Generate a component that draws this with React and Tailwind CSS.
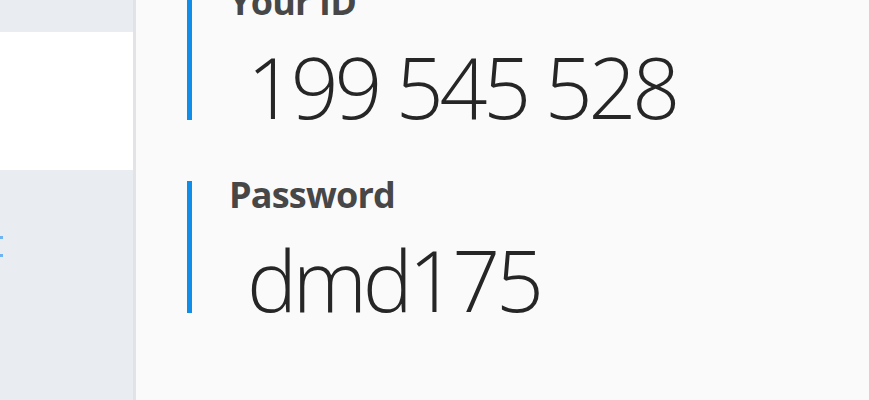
import React from 'react';

const Field = ({ label, value }) => (
  <div className="flex flex-col h-[132px] border-l-[5px] border-[#0f8de9] pl-[37px]">
    <div className="-mt-[5px] text-[36px] leading-[37px] font-bold text-[#474747] tracking-[-0.8px]">{label}</div>
    <div className="mt-[25px] pl-[18px] text-[84px] leading-[84px] font-light text-[#262626] tracking-[-4.2px]">
      {value}
    </div>
  </div>
);

const App = () => {
  return (
    <div
      className="flex w-[869px] h-[400px] overflow-hidden bg-[#fafafa]"
      style={{ fontFamily: '"Open Sans", "Noto Sans", sans-serif' }}
    >
      {/* Sidebar */}
      <aside className="w-[136px] shrink-0 bg-[#e9ecf1] border-r-[3px] border-[#e1e3e7] pt-[32px]">
        <div className="h-[138px] bg-white" />
        <div className="mt-[66px] space-y-[15px]">
          <div className="w-[3px] h-[3px] bg-[#6fb3f2]" />
          <div className="w-[3px] h-[3px] bg-[#6fb3f2]" />
        </div>
      </aside>

      {/* Main */}
      <main className="flex-1 pl-[51px] -mt-[12px] space-y-[61px]">
        <Field label="Your ID" value="199 545 528" />
        <Field label="Password" value="dmd175" />
      </main>
    </div>
  );
};

export default App;
